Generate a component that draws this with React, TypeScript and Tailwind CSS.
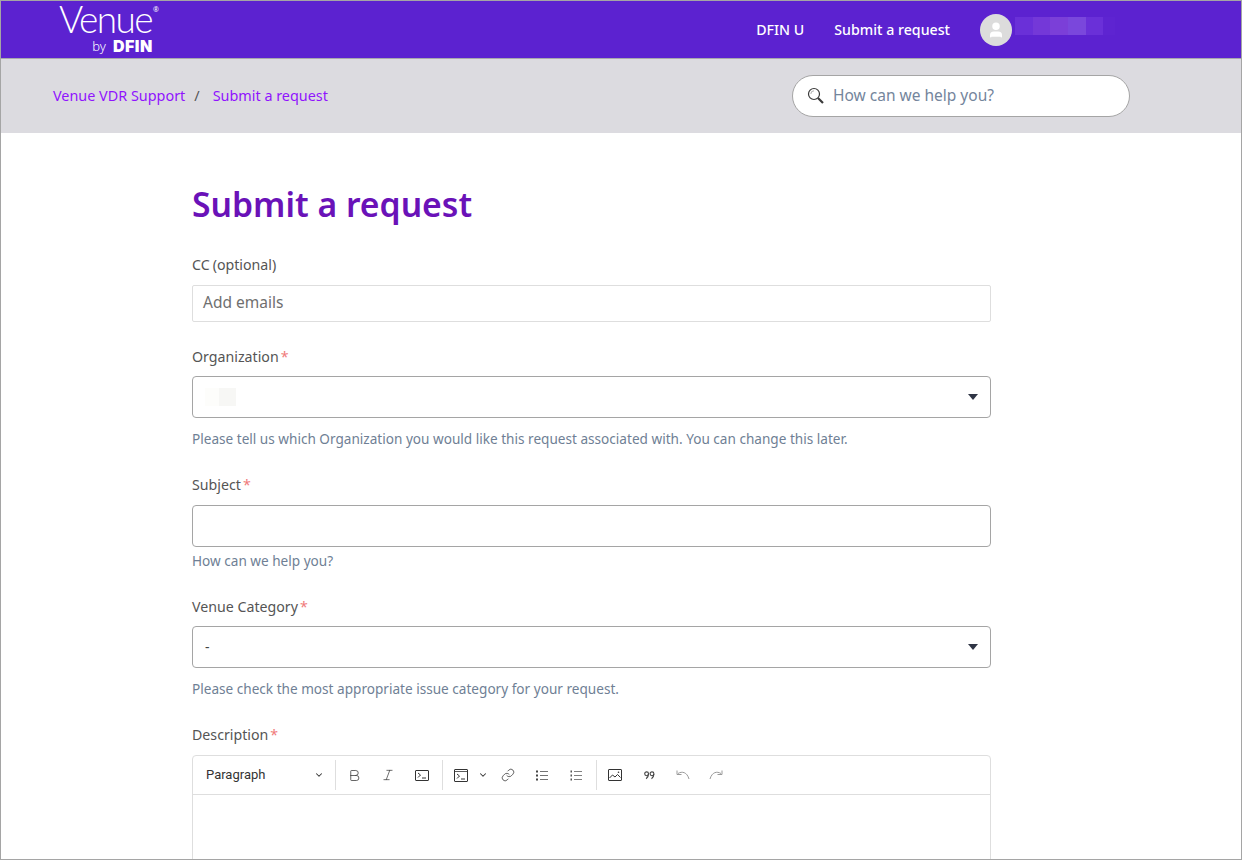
import { Bold, ChevronDown, Italic, Link, User } from "lucide-react";

const font = "font-['Noto_Sans','Open_Sans',sans-serif]";

function Label({ text, required }: { text: string; required?: boolean }) {
  return (
    <label className="block text-[14.2px] leading-[20px] text-[#555]">
      {text}
      {required && <span className="ml-[2px] text-[#f07a7a]">*</span>}
    </label>
  );
}

function Hint({ text, tight }: { text: string; tight?: boolean }) {
  return (
    <p className={`${tight ? "mt-[4px]" : "mt-[11px]"} text-[13.6px] leading-[20px] text-[#6f7f95]`}>
      {text}
    </p>
  );
}

function Caret() {
  return (
    <span className="h-0 w-0 border-x-[5px] border-t-[6px] border-x-transparent border-t-[#2f3545]" />
  );
}

function SearchIcon() {
  return (
    <svg width="18" height="18" viewBox="0 0 18 18" fill="none" stroke="#3a3a3a">
      <circle cx="7" cy="7" r="5.5" strokeWidth="1.2" />
      <path d="M3.8 7A3.2 3.2 0 0 1 7 3.8" strokeWidth="0.8" stroke="#999" />
      <path d="M11 11l5 5" strokeWidth="2.2" />
    </svg>
  );
}

function InlineCodeIcon() {
  return (
    <svg width="14" height="11" viewBox="0 0 14 11" fill="none" stroke="#333" strokeWidth="1">
      <rect x="0.5" y="0.5" width="13" height="10" rx="0.5" />
      <path d="M3 3l2.5 2L3 7.5M7 8h4" />
    </svg>
  );
}

function CodeBlockIcon() {
  return (
    <svg width="14" height="13" viewBox="0 0 14 13" fill="none" stroke="#333" strokeWidth="1">
      <rect x="0.5" y="0.5" width="13" height="12" rx="0.5" />
      <path d="M0.5 2.5h13" strokeWidth="0.8" />
      <path d="M3 5l2.5 2L3 9.5M7 10h4" />
    </svg>
  );
}

function ImageIcon() {
  return (
    <svg width="14" height="12" viewBox="0 0 14 12" fill="none" stroke="#333" strokeWidth="1">
      <rect x="0.5" y="0.5" width="13" height="11" rx="0.5" />
      <path d="M1.5 9l3-3 2.5 2 2.5-2.5 3 3" />
      <circle cx="10.5" cy="3.2" r="0.8" fill="#333" stroke="none" />
    </svg>
  );
}

function BulletIcon() {
  return (
    <svg width="12" height="11" viewBox="0 0 12 11" fill="#444">
      <rect x="0" y="0.5" width="2" height="2" />
      <rect x="0" y="4.5" width="2" height="2" />
      <rect x="0" y="8.5" width="2" height="2" />
      <rect x="4" y="1" width="8" height="1" opacity="0.75" />
      <rect x="4" y="5" width="8" height="1" opacity="0.75" />
      <rect x="4" y="9" width="8" height="1" opacity="0.75" />
    </svg>
  );
}

function NumberIcon() {
  return (
    <svg width="12" height="11" viewBox="0 0 12 11" fill="#555">
      <rect x="0.5" y="0.5" width="1.5" height="2" />
      <rect x="0.5" y="4.5" width="1.5" height="2" />
      <rect x="0.5" y="8.5" width="1.5" height="2" />
      <rect x="4" y="1" width="8" height="1" opacity="0.75" />
      <rect x="4" y="5" width="8" height="1" opacity="0.75" />
      <rect x="4" y="9" width="8" height="1" opacity="0.75" />
    </svg>
  );
}

function QuoteIcon() {
  return (
    <svg width="11" height="9" viewBox="0 0 11 9" fill="none" stroke="#444" strokeWidth="1.1">
      <circle cx="2.6" cy="2.8" r="1.9" />
      <path d="M4.5 3c0 2-.8 3.6-2.4 4.8" />
      <circle cx="8" cy="2.8" r="1.9" />
      <path d="M9.9 3c0 2-.8 3.6-2.4 4.8" />
    </svg>
  );
}

function UndoIcon({ flip }: { flip?: boolean }) {
  return (
    <svg width="14" height="10" viewBox="0 0 14 10" fill="none" stroke="#9a9a9a" strokeWidth="1" className={flip ? "-scale-x-100" : ""}>
      <path d="M2 3.5c4-2.5 9-1.5 11 5.5" />
      <path d="M1 0.5v4h4.5" />
    </svg>
  );
}

function Divider() {
  return <span className="ml-[3px] mr-[1px] h-[30px] w-px bg-[#dedede]" />;
}

function ToolBtn({ children, w = "w-[34px]" }: { children: React.ReactNode; w?: string }) {
  return <span className={`flex h-[30px] items-center justify-center ${w}`}>{children}</span>;
}

export default function App() {
  return (
    <div className={`${font} h-[860px] overflow-hidden border border-[#a5a5a5] bg-white`}>
      <header className="flex h-[58px] items-start border-b border-[#a8a8ad] bg-[#5c22d0] pl-[58px] text-white">
        <div className="flex flex-col items-end">
          <div className="flex items-start">
            <span className="font-['Lato',sans-serif] text-[37px] font-light leading-[36px] tracking-[-1.6px]">
              Venue
            </span>
            <span className="ml-[1px] mt-[5px] text-[7px] leading-none">®</span>
          </div>
          <div className="flex items-center gap-[7px] pr-[6px] leading-[18px]">
            <span className="text-[13px] font-light">by</span>
            <span className="font-['Inter',sans-serif] text-[16px] font-black tracking-[0.5px]">DFIN</span>
          </div>
        </div>
        <nav className="ml-auto flex h-[57px] items-center text-[14.2px] font-medium">
          <a>DFIN U</a>
          <a className="ml-[30px]">Submit a request</a>
          <span className="ml-[30px] flex h-[32px] w-[32px] items-center justify-center overflow-hidden rounded-full bg-[#dcdcdc]">
            <User size={18} fill="#fff" stroke="#fff" />
          </span>
          <span className="mb-[7px] ml-[3px] mr-[126px] flex h-[18px]">
            <span className="w-[18px] bg-[#6a30d8]" />
            <span className="w-[17px] bg-[#7438d8]" />
            <span className="w-[18px] bg-[#7b3fd8]" />
            <span className="w-[18px] bg-[#7a47dc]" />
            <span className="w-[17px] bg-[#6a30d8]" />
            <span className="w-[12px] bg-[#5e24d1]" />
          </span>
        </nav>
      </header>

      <div className="flex h-[74px] items-center justify-between bg-[#dcdbe0] pl-[52px] pr-[111px]">
        <nav className="flex items-center text-[14.4px] text-[#9013fe]">
          <a>Venue VDR Support</a>
          <span className="ml-[9px] mr-[13px] text-[#555]">/</span>
          <a>Submit a request</a>
        </nav>
        <div className="flex h-[42px] w-[338px] items-center rounded-full border border-[#a5a5a5] bg-white pl-[14px]">
          <SearchIcon />
          <span className="ml-[8px] text-[15.5px] text-[#74859c]">How can we help you?</span>
        </div>
      </div>

      <main className="ml-[191px] w-[799px]">
        <h1 className="mt-[49px] text-[33.7px] font-semibold leading-[44px] text-[#6a12b8]">
          Submit a request
        </h1>

        <div className="mt-[29px]">
          <label className="block text-[14.2px] leading-[20px] text-[#555]">
            CC<span className="ml-[3px]">(optional)</span>
          </label>
          <div className="mt-[10px] flex h-[37px] items-center rounded-[2px] border border-[#dedede] px-[10px] pb-[2px] text-[15.5px] text-[#6f6f6f]">
            Add emails
          </div>
        </div>

        <div className="mt-[25px]">
          <Label text="Organization" required />
          <div className="mt-[9px] flex h-[42px] items-center justify-between rounded-[4px] border border-[#a5a5a5] pl-[12px] pr-[12px]">
            <span className="flex">
              <span className="h-[18px] w-[14px] bg-[#fdfdfb]" />
              <span className="h-[18px] w-[17px] bg-[#f7f7f5]" />
            </span>
            <Caret />
          </div>
          <Hint text="Please tell us which Organization you would like this request associated with. You can change this later." />
        </div>

        <div className="mt-[26px]">
          <Label text="Subject" required />
          <div className="mt-[10px] h-[42px] rounded-[4px] border border-[#a5a5a5]" />
          <Hint text="How can we help you?" tight />
        </div>

        <div className="mt-[26px]">
          <Label text="Venue Category" required />
          <div className="mt-[9px] flex h-[42px] items-center justify-between rounded-[4px] border border-[#a5a5a5] px-[12px] text-[14px] text-[#444]">
            <span className="mb-[2px]">-</span>
            <Caret />
          </div>
          <Hint text="Please check the most appropriate issue category for your request." />
        </div>

        <div className="mt-[26px]">
          <Label text="Description" required />
          <div className="mt-[10px] h-[200px] rounded-t-[4px] border border-[#dedede]">
            <div className="flex h-[39px] items-center border-b border-[#dedede] pl-[13px] text-[#333]">
              <span className="flex w-[126px] items-center justify-between pr-[8px] font-['Roboto',sans-serif] text-[13px]">
                Paragraph
                <ChevronDown size={10} strokeWidth={2.5} />
              </span>
              <Divider />
              <ToolBtn><Bold size={15} strokeWidth={1.2} /></ToolBtn>
              <ToolBtn><Italic size={14} strokeWidth={1.2} /></ToolBtn>
              <ToolBtn><InlineCodeIcon /></ToolBtn>
              <Divider />
              <ToolBtn><CodeBlockIcon /></ToolBtn>
              <ToolBtn w="w-[13px] pr-[3px]"><ChevronDown size={10} strokeWidth={2.5} /></ToolBtn>
              <ToolBtn><Link size={14} strokeWidth={1.3} /></ToolBtn>
              <ToolBtn><BulletIcon /></ToolBtn>
              <ToolBtn><NumberIcon /></ToolBtn>
              <Divider />
              <ToolBtn><ImageIcon /></ToolBtn>
              <ToolBtn><QuoteIcon /></ToolBtn>
              <ToolBtn><UndoIcon /></ToolBtn>
              <ToolBtn w="w-[31px]"><UndoIcon flip /></ToolBtn>
            </div>
          </div>
        </div>
      </main>
    </div>
  );
}
